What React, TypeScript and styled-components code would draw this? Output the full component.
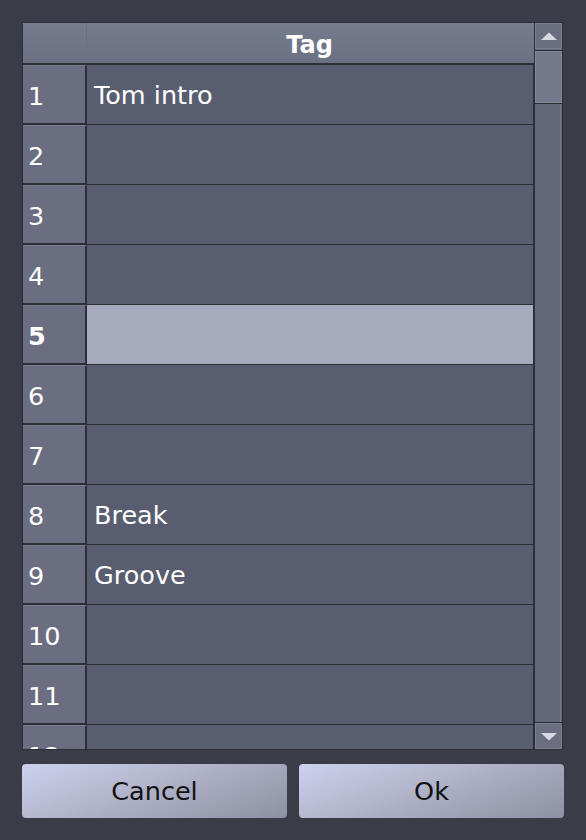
import React from "react";
import styled, { createGlobalStyle } from "styled-components";

const Global = createGlobalStyle`
  html, body { margin: 0; padding: 0; background: #3a3d48; }
  body { font-family: "DejaVu Sans", "Liberation Sans", sans-serif; }
  * { box-sizing: border-box; }
`;

const Page = styled.div`
  width: 586px;
  height: 840px;
  padding: 22px 22px 0 22px;
  display: flex;
  flex-direction: column;
  background: #3a3d48;
`;

const Frame = styled.div`
  width: 541px;
  height: 728px;
  border: 1px solid #2c2f37;
  display: flex;
  flex-direction: row;
  background: #3a3d48;
`;

const Grid = styled.div`
  width: 511px;
  display: flex;
  flex-direction: column;
  overflow: hidden;
`;

const HeaderRow = styled.div`
  height: 42px;
  flex: none;
  display: flex;
  border-bottom: 2px solid #2c2f37;
  background: linear-gradient(#777b8e, #6c7083);
`;

const Corner = styled.div`
  width: 64px;
  border-right: 1px solid #6c7083;
`;

const HeaderCell = styled.div`
  flex: 1;
  display: flex;
  align-items: center;
  justify-content: center;
  color: #ffffff;
  font-weight: bold;
  font-size: 24px;
  padding-right: 2px;
  padding-top: 4px;
`;

const Row = styled.div`
  height: 60px;
  flex: none;
  display: flex;
`;

const RowHead = styled.div<{ $bold?: boolean }>`
  width: 64px;
  border-right: 2px solid #2c2f37;
  border-bottom: 2px solid #2c2f37;
  border-top: 1px solid #7a7e90;
  background: #6a6e80;
  color: #ffffff;
  font-size: 25.5px;
  font-weight: ${(p) => (p.$bold ? "bold" : "normal")};
  display: flex;
  align-items: center;
  padding-left: 5px;
  padding-top: 2px;
`;

const Cell = styled.div<{ $selected?: boolean }>`
  flex: 1;
  background: ${(p) => (p.$selected ? "#a6aabd" : "#595d70")};
  border-bottom: 1px solid #2c2f37;
  border-right: 1px solid #2c2f37;
  color: #ffffff;
  font-size: 25.5px;
  display: flex;
  align-items: center;
  padding-left: 7px;
  padding-top: 1px;
`;

const Scrollbar = styled.div`
  width: 28px;
  display: flex;
  flex-direction: column;
  background: #63677a;
  border-left: 1px solid #2c2f37;
`;

const ArrowBtn = styled.div`
  height: 26px;
  flex: none;
  display: flex;
  align-items: center;
  justify-content: center;
  background: #6a6e80;
  border: 1px solid #7b7f92;
`;

const Thumb = styled.div`
  height: 54px;
  flex: none;
  margin-top: 1px;
  border-top: 1px solid #2c2f37;
  border-bottom: 1px solid #2c2f37;
  background: #2c2f37;
  display: flex;
`;

const ThumbInner = styled.div`
  flex: 1;
  background: #74788b;
  border: 1px solid #84889b;
`;

const Track = styled.div`
  flex: 1;
  border-right: 1px solid #74788a;
  margin-right: 1px;
`;

const DownWrap = styled.div`
  border-top: 1px solid #2c2f37;
`;

const Buttons = styled.div`
  display: flex;
  gap: 12px;
  margin-top: 14px;
  width: 542px;
`;

const Button = styled.div`
  flex: 1;
  height: 54px;
  border-radius: 4px;
  background: linear-gradient(160deg, #cdd1ee 0%, #aeb1c6 50%, #8e91a3 100%);
  color: #111111;
  font-size: 25.5px;
  display: flex;
  align-items: center;
  justify-content: center;
`;

const rows: { n: number; text: string }[] = [
  { n: 1, text: "Tom intro" },
  { n: 2, text: "" },
  { n: 3, text: "" },
  { n: 4, text: "" },
  { n: 5, text: "" },
  { n: 6, text: "" },
  { n: 7, text: "" },
  { n: 8, text: "Break" },
  { n: 9, text: "Groove" },
  { n: 10, text: "" },
  { n: 11, text: "" },
  { n: 12, text: "" },
];

const Up = () => (
  <svg width="18" height="9" viewBox="0 0 18 9">
    <polygon points="9,0.5 17,8 1,8" fill="#d5d8e3" />
  </svg>
);
const Down = () => (
  <svg width="18" height="9" viewBox="0 0 18 9">
    <polygon points="1,1 17,1 9,8.5" fill="#d5d8e3" />
  </svg>
);

export default function App() {
  return (
    <>
      <Global />
      <Page>
        <Frame>
          <Grid>
            <HeaderRow>
              <Corner />
              <HeaderCell>Tag</HeaderCell>
            </HeaderRow>
            {rows.map((r) => (
              <Row key={r.n}>
                <RowHead $bold={r.n === 5}>{r.n}</RowHead>
                <Cell $selected={r.n === 5}>{r.text}</Cell>
              </Row>
            ))}
          </Grid>
          <Scrollbar>
            <ArrowBtn>
              <Up />
            </ArrowBtn>
            <Thumb>
              <ThumbInner />
            </Thumb>
            <Track />
            <DownWrap>
              <ArrowBtn>
                <Down />
              </ArrowBtn>
            </DownWrap>
          </Scrollbar>
        </Frame>
        <Buttons>
          <Button>Cancel</Button>
          <Button>Ok</Button>
        </Buttons>
      </Page>
    </>
  );
}
